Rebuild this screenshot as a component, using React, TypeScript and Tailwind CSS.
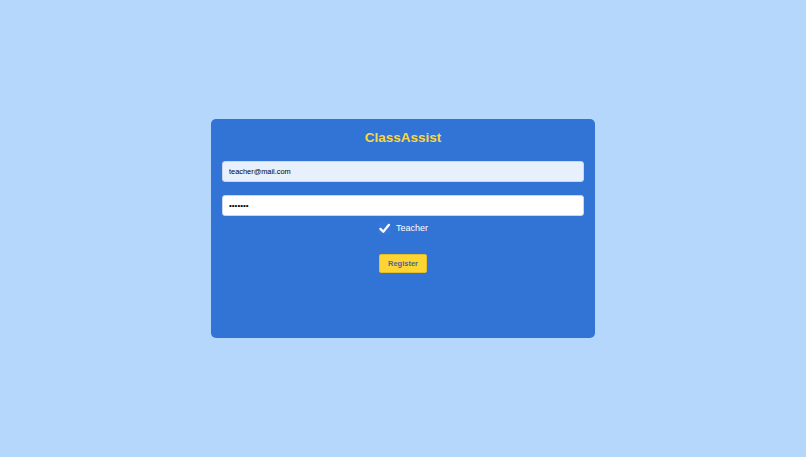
import React, { useState } from 'react';

const App = () => {
  const [email, setEmail] = useState('teacher@mail.com');
  const [password, setPassword] = useState('1234567');
  const [isTeacher, setIsTeacher] = useState(true);

  return (
    <div className="min-h-screen w-full bg-[#b5d7fb] flex items-center justify-center font-['Liberation_Sans',Arial,sans-serif]">
      {/* Register card */}
      <div className="w-[384px] h-[219px] rounded-[5px] bg-[#3273d6] px-[11px] pt-[10px] flex flex-col">
        <h1 className="text-center text-[13.5px] leading-[18px] font-bold text-[#f8d647]">ClassAssist</h1>

        <input
          type="email"
          value={email}
          onChange={(e) => setEmail(e.target.value)}
          className="mt-[14px] h-[21px] w-full rounded-[3px] border border-[#c9d6ec] bg-[#e8f0fe] px-[6px] text-[7.4px] text-black outline-none"
        />
        <input
          type="password"
          value={password}
          onChange={(e) => setPassword(e.target.value)}
          className="mt-[13px] h-[21px] w-full rounded-[3px] border border-[#c9d6ec] bg-white px-[6px] text-[8px] text-black outline-none"
        />

        <label className="mt-[5px] flex items-center justify-center gap-[5px] cursor-pointer">
          <span
            onClick={() => setIsTeacher(!isTeacher)}
            className="flex h-[13px] w-[13px] items-center justify-center rounded-[3px] bg-[#3676d9]"
          >
            {isTeacher && (
              <svg viewBox="0 0 16 16" className="h-[13px] w-[13px]">
                <path d="M3 8.5 L6.5 12 L13.5 3.5" fill="none" stroke="white" strokeWidth="2.8" strokeLinecap="round" strokeLinejoin="round" />
              </svg>
            )}
          </span>
          <span className="text-[9px] leading-[14px] text-white">Teacher</span>
        </label>

        <div className="mt-[19px] flex justify-center">
          <button className="h-[19px] w-[48px] rounded-[2px] border border-[#e5bf2a] bg-[#fcd535] text-[7.5px] font-bold text-[#4a6596]">
            Register
          </button>
        </div>
      </div>
    </div>
  );
};

export default App;
